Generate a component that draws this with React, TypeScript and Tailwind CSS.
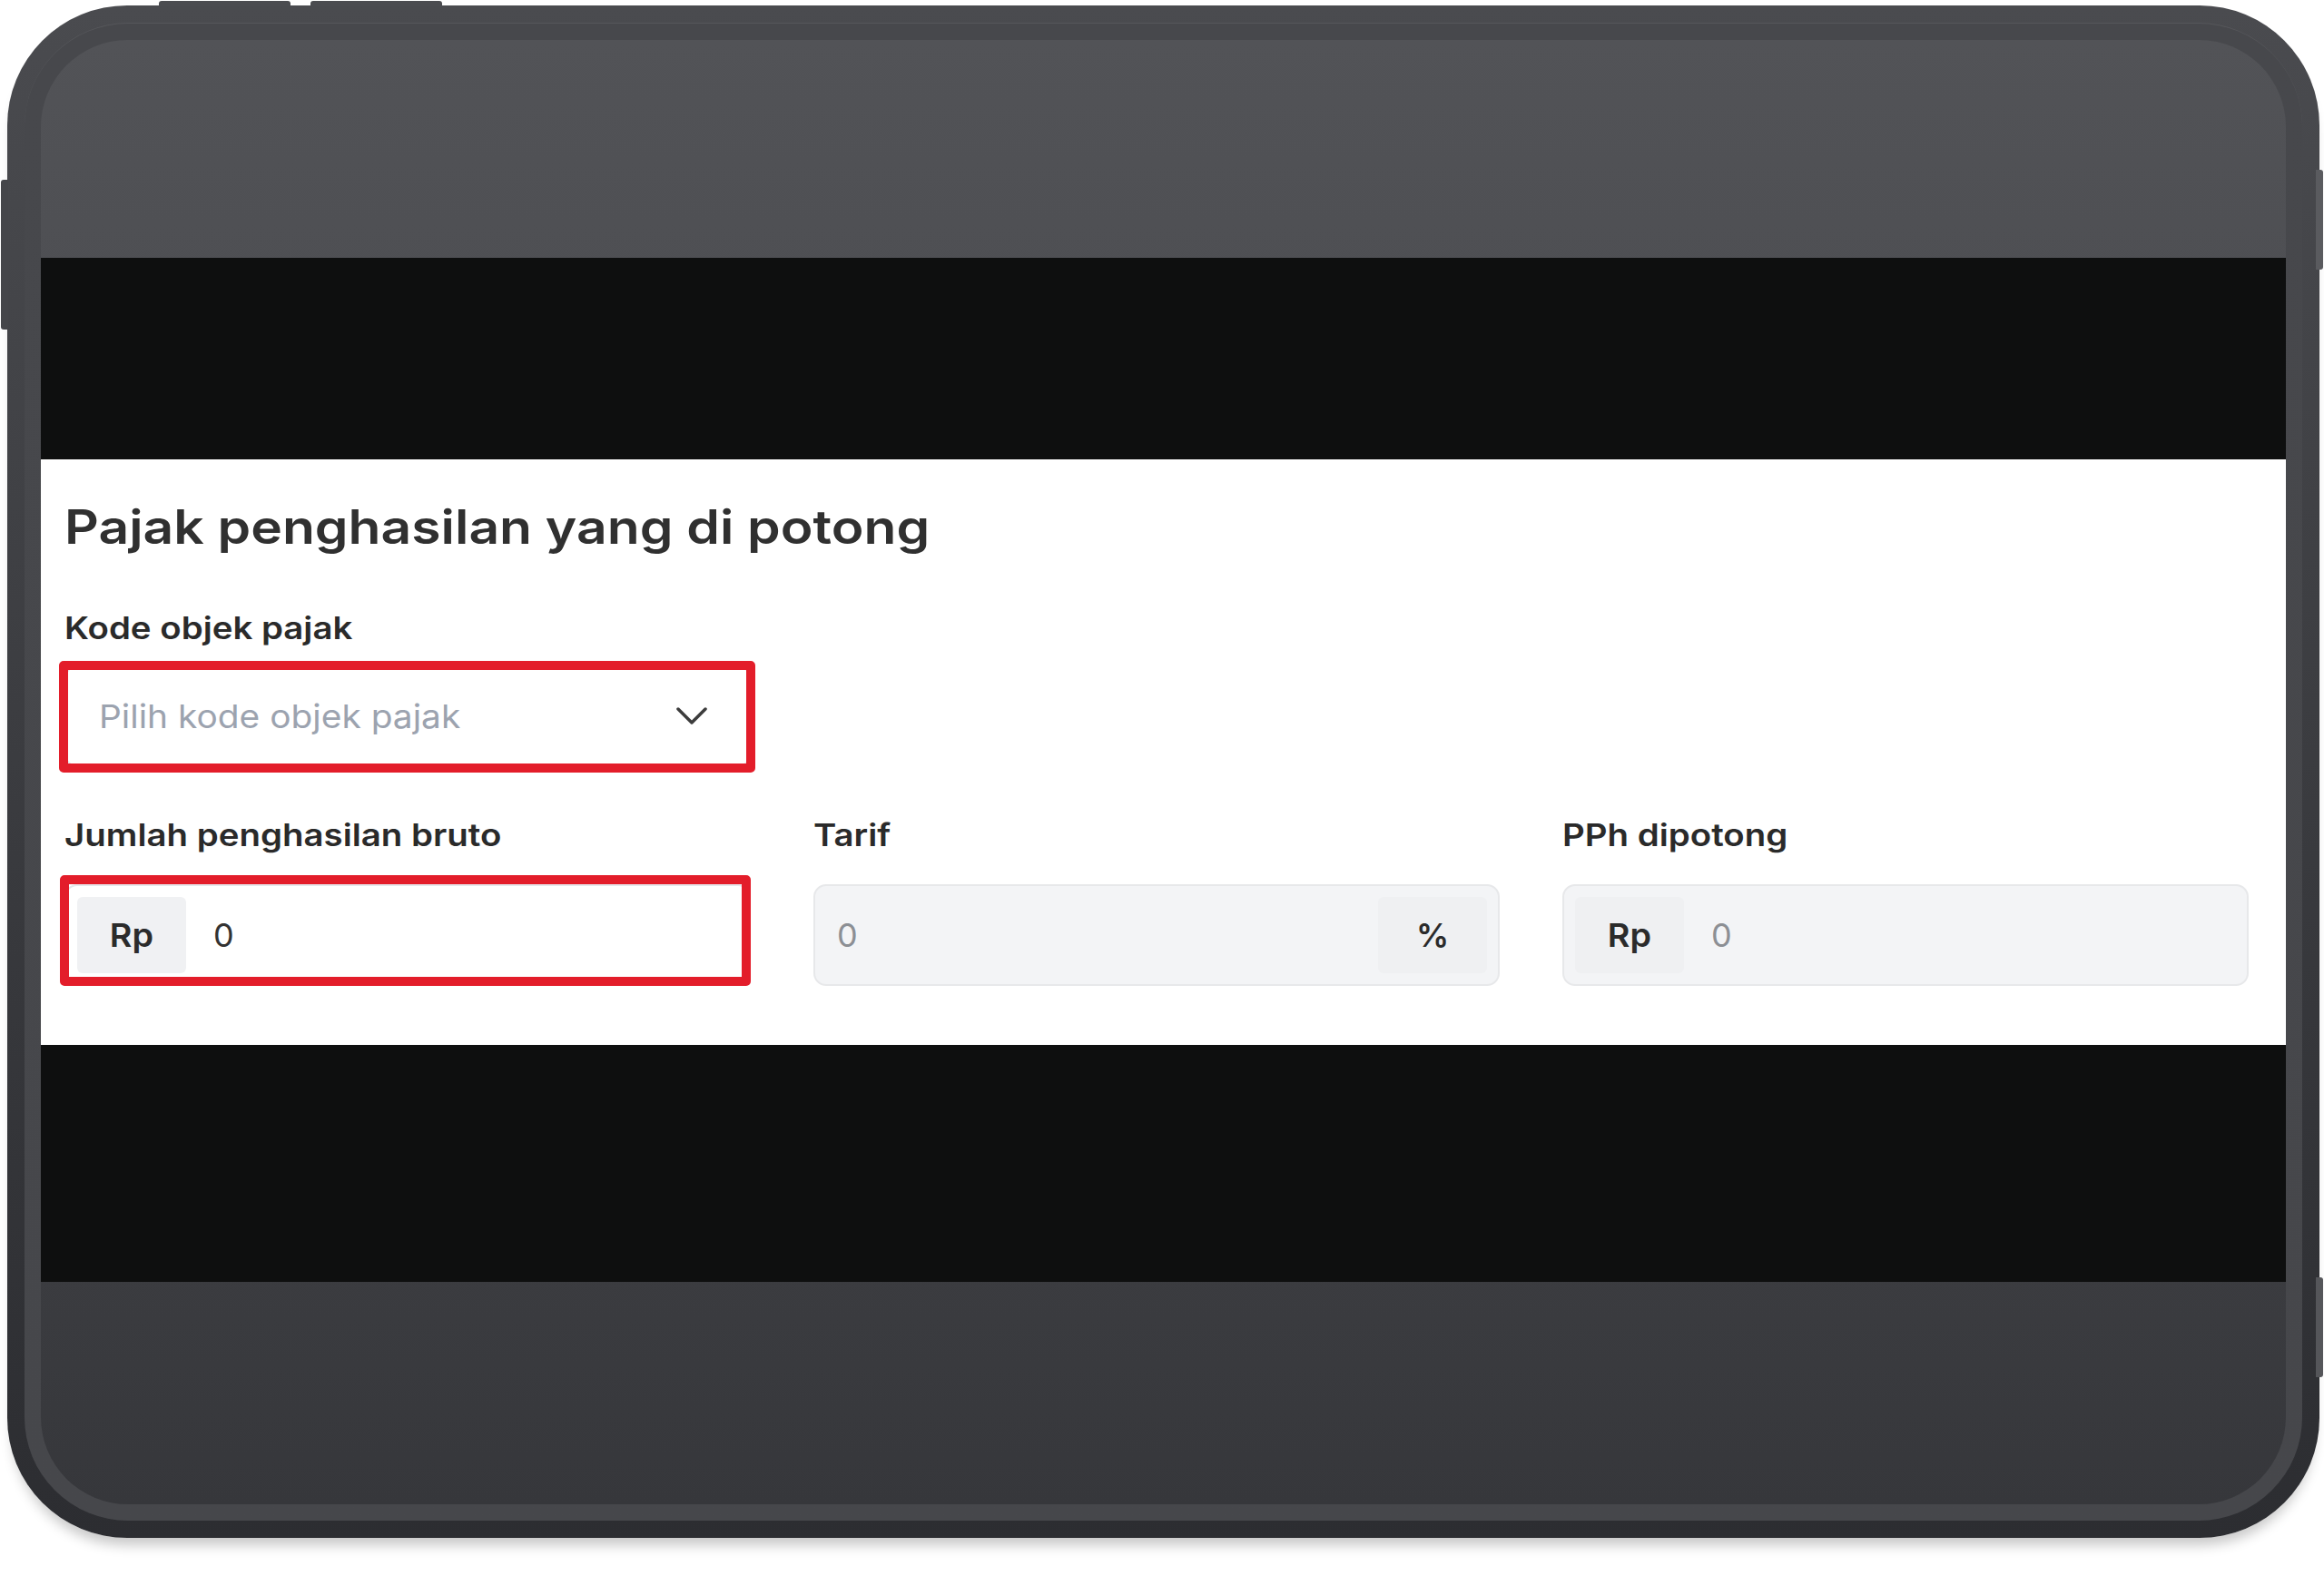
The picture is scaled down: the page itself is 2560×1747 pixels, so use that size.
import React from "react";

const font = { fontFamily: "Inter, 'Noto Sans', sans-serif" };

function RedMark({ cls }: { cls: string }) {
  return (
    <div
      className={
        "pointer-events-none absolute rounded-[5px] border-[10px] border-[#e31d2a] " + cls
      }
    />
  );
}

function Label({ children }: { children: React.ReactNode }) {
  return (
    <div className="text-[34px] font-semibold leading-[40px] text-[#2a2a2a]">
      <span className="inline-block origin-left scale-x-[1.13]">{children}</span>
    </div>
  );
}

function AddonInput({
  prefix,
  suffix,
  value,
  disabled,
}: {
  prefix?: string;
  suffix?: string;
  value: string;
  disabled?: boolean;
}) {
  return (
    <div
      className={
        "flex h-[112px] items-center rounded-[14px] border-2 p-[12px] " +
        (disabled ? "border-[#e7e8ea] bg-[#f3f4f6]" : "border-[#e5e7eb] bg-white")
      }
    >
      {prefix && (
        <div
          className={
            "flex h-full w-[120px] items-center justify-center rounded-[6px] text-[36px] font-semibold text-[#2b2b2b] " +
            (disabled ? "bg-[#eff0f2]" : "bg-[#f0f1f3]")
          }
        >
          <span className="inline-block scale-x-[1.05]">{prefix}</span>
        </div>
      )}
      <div
        className={
          "flex-1 text-[36px] " +
          (prefix ? "pl-[30px] " : "pl-[12px] ") +
          (disabled ? "text-[#8c8f94]" : "text-[#333333]")
        }
      >
        {value}
      </div>
      {suffix && (
        <div className="flex h-full w-[120px] items-center justify-center rounded-[6px] bg-[#eff0f2] text-[36px] font-semibold text-[#2b2b2b]">
          {suffix}
        </div>
      )}
    </div>
  );
}

export default function App() {
  return (
    <div className="relative h-[1747px] w-[2560px] overflow-hidden bg-white" style={font}>
      {/* hardware buttons */}
      <div className="absolute left-[175px] top-[1px] h-[6px] w-[145px] rounded-t-[3px] bg-[#4b4c50]" />
      <div className="absolute left-[342px] top-[1px] h-[6px] w-[145px] rounded-t-[3px] bg-[#4b4c50]" />
      <div className="absolute left-[1px] top-[198px] h-[165px] w-[8px] rounded-l-[3px] bg-[#45464a]" />
      <div className="absolute left-[2551px] top-[187px] h-[110px] w-[8px] rounded-r-[3px] bg-[#5a5b5f]" />
      <div className="absolute left-[2551px] top-[1407px] h-[110px] w-[8px] rounded-r-[3px] bg-[#55565a]" />

      {/* device */}
      <div className="ml-[8px] mt-[6px] h-[1688px] w-[2547px] rounded-[132px] bg-linear-to-b from-[#4a4b4f] to-[#2c2d31] p-[19px] shadow-[0_14px_14px_-6px_rgba(0,0,0,0.22)]">
        <div className="h-full w-full rounded-[114px] border-t border-[#56575b] bg-linear-to-b from-[#47484c] to-[#46474b] p-[18px]">
          <div className="flex h-full w-full flex-col overflow-hidden rounded-[96px] bg-linear-to-b from-[#525357] via-[#46474b] to-[#36373b]">
            <div className="h-[240px] shrink-0" />
            <div className="h-[222px] shrink-0 bg-[#0e0f0f]" />

            {/* white content */}
            <div className="h-[645px] shrink-0 bg-white pl-[26px] pt-[49px]">
              <h1 className="text-[52px] font-semibold leading-none text-[#303030]">
                <span className="inline-block origin-left scale-x-[1.13]">
                  Pajak penghasilan yang di potong
                </span>
              </h1>

              <div className="mt-[65px]">
                <Label>Kode objek pajak</Label>
              </div>
              <div className="relative mt-[21px] w-[756px]">
                <div className="flex h-[112px] items-center justify-between rounded-[14px] border-2 border-[#e5e7eb] bg-white pl-[36px] pr-[46px]">
                  <span className="inline-block origin-left scale-x-[1.08] text-[36px] text-[#9ca3af]">
                    Pilih kode objek pajak
                  </span>
                  <svg width="34" height="20" viewBox="0 0 34 20" fill="none">
                    <path
                      d="M2 2 L17 17 L32 2"
                      stroke="#3c3c3c"
                      strokeWidth="3.5"
                      strokeLinecap="round"
                      strokeLinejoin="round"
                    />
                  </svg>
                </div>
                <RedMark cls="-top-[5px] -left-[6px] -right-[5px] -bottom-[6px]" />
              </div>

              <div className="mt-[55px] grid grid-cols-[756px_756px_756px] gap-x-[69px]">
                <div>
                  <Label>Jumlah penghasilan bruto</Label>
                  <div className="relative mt-[34px]">
                    <AddonInput prefix="Rp" value="0" />
                    <RedMark cls="-top-[10px] -left-[5px] right-0 bottom-0" />
                  </div>
                </div>
                <div>
                  <Label>Tarif</Label>
                  <div className="mt-[34px]">
                    <AddonInput suffix="%" value="0" disabled />
                  </div>
                </div>
                <div>
                  <Label>PPh dipotong</Label>
                  <div className="mt-[34px]">
                    <AddonInput prefix="Rp" value="0" disabled />
                  </div>
                </div>
              </div>
            </div>

            <div className="h-[261px] shrink-0 bg-[#0e0f0f]" />
            <div className="flex-1" />
          </div>
        </div>
      </div>
    </div>
  );
}
